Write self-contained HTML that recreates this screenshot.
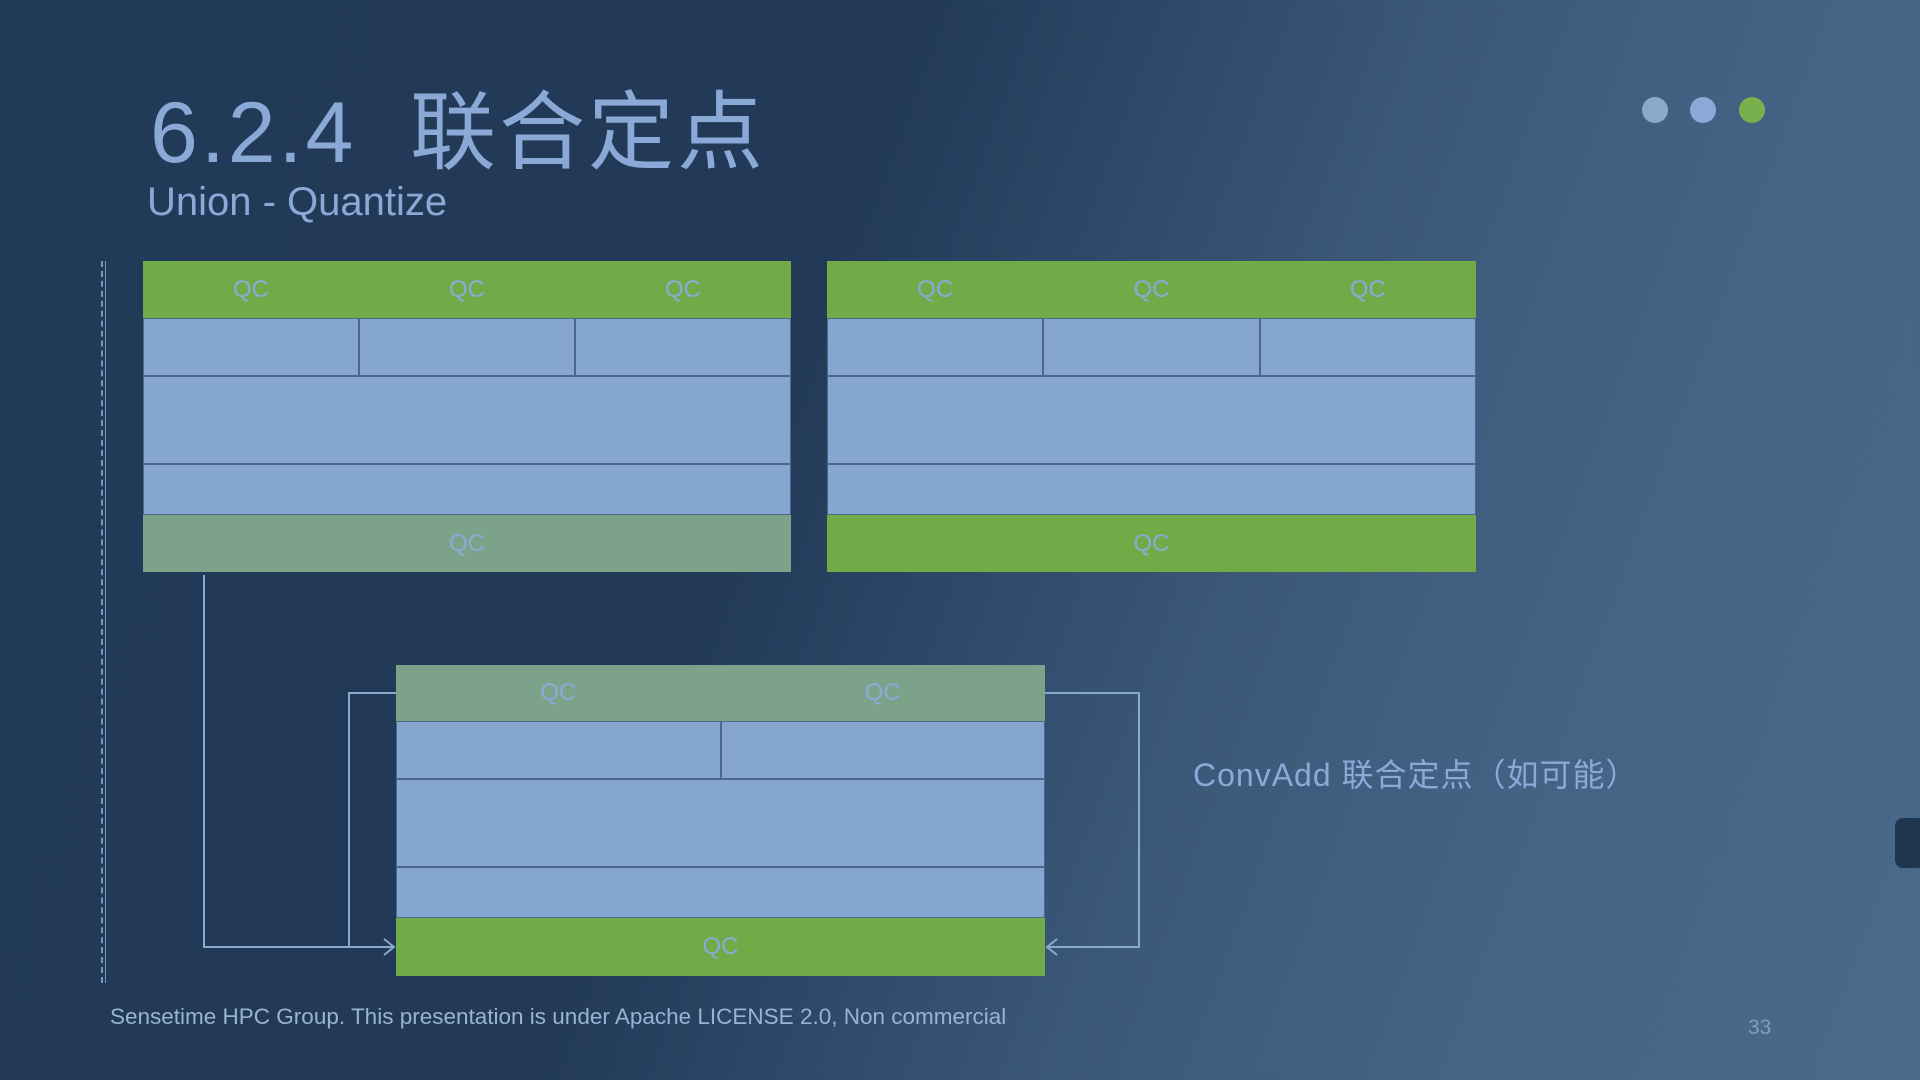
<!DOCTYPE html>
<html><head><meta charset="utf-8"><style>
body{margin:0;width:1920px;height:1080px;overflow:hidden;font-family:"Liberation Sans","Noto Sans CJK SC",sans-serif;
background:linear-gradient(110deg,#213a58 0%,#223a58 40%,#3a5778 62%,#456485 80%,#4a6a8a 100%);position:relative}
.a{position:absolute}
.g{background:#70ab48;color:#8aaad8;font-size:24px;display:flex;align-items:center;justify-content:space-around}
.b{background:#85a6d0;border:1px solid #4d6788;box-sizing:border-box}
.t{color:#8aa9d6}
</style></head><body>
<div class="a t" style="left:150px;top:62px;font-size:86px;letter-spacing:3px">6.2.4&nbsp; 联合定点</div>
<div class="a t" style="left:147px;top:180px;font-size:40px">Union - Quantize</div>
<div class="a" style="left:1642px;top:97px;width:26px;height:26px;border-radius:50%;background:#8aa9c8"></div>
<div class="a" style="left:1690px;top:97px;width:26px;height:26px;border-radius:50%;background:#8aa9d6"></div>
<div class="a" style="left:1739px;top:97px;width:26px;height:26px;border-radius:50%;background:#79b04e"></div>
<div class="a" style="left:101px;top:261px;height:722px;border-left:2px dashed #7a96bd"></div>
<div class="a" style="left:105px;top:261px;height:722px;border-left:1px solid #7a96bd"></div>

<div class="a" style="left:143px;top:261px;width:648px">
<div class="g" style="height:57px"><span>QC</span><span>QC</span><span>QC</span></div>
<div style="display:flex;height:58px"><div class="b" style="flex:1"></div><div class="b" style="flex:1"></div><div class="b" style="flex:1"></div></div>
<div class="b" style="height:88px"></div><div class="b" style="height:51px"></div>
<div class="g" style="height:57px;background:#7ca38a;justify-content:center"><span>QC</span></div>
</div>
<div class="a" style="left:827px;top:261px;width:649px">
<div class="g" style="height:57px"><span>QC</span><span>QC</span><span>QC</span></div>
<div style="display:flex;height:58px"><div class="b" style="flex:1"></div><div class="b" style="flex:1"></div><div class="b" style="flex:1"></div></div>
<div class="b" style="height:88px"></div><div class="b" style="height:51px"></div>
<div class="g" style="height:57px;justify-content:center"><span>QC</span></div>
</div>
<div class="a" style="left:396px;top:665px;width:649px">
<div class="g" style="height:56px;background:#7ca38a"><span>QC</span><span>QC</span></div>
<div style="display:flex;height:58px"><div class="b" style="flex:1"></div><div class="b" style="flex:1"></div></div>
<div class="b" style="height:88px"></div><div class="b" style="height:51px"></div>
<div class="g" style="height:58px;justify-content:center"><span>QC</span></div>
</div>
<svg class="a" style="left:0;top:0" width="1920" height="1080"><g fill="none" stroke="#8aa9d0" stroke-width="2">
<path d="M204 575V947H394M384 939l10 8-10 8"/>
<path d="M396 693H349V947"/>
<path d="M1045 693H1139V947H1047M1057 939l-10 8 10 8"/></g></svg>
<div class="a t" style="left:1193px;top:750px;font-size:32px;letter-spacing:1px">ConvAdd 联合定点（如可能）</div>
<div class="a" style="left:110px;top:1004px;font-size:22.5px;color:#9ab3d3">Sensetime HPC Group. This presentation is under Apache LICENSE 2.0, Non commercial</div>
<div class="a" style="left:1748px;top:1016px;font-size:21px;color:#7f9cc0">33</div>
<div class="a" style="left:1895px;top:818px;width:30px;height:50px;border-radius:8px;background:#1f3550"></div>
</body></html>
